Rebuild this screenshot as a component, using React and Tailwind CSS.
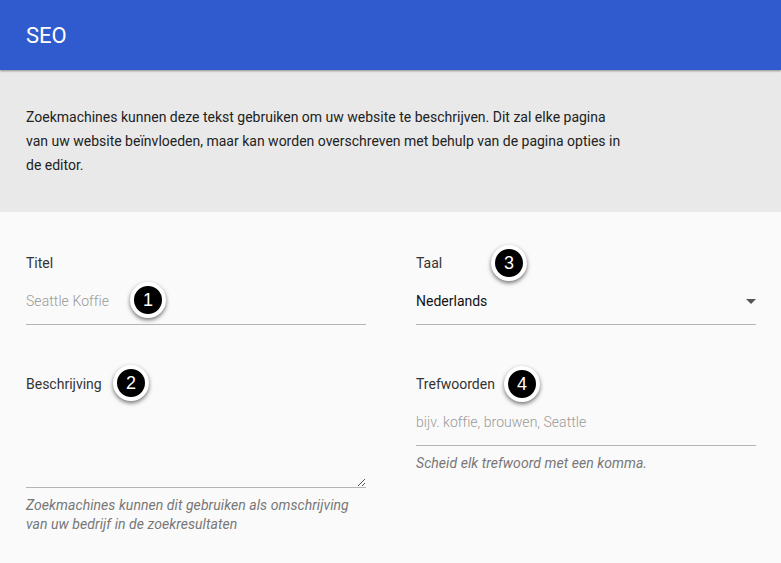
function Badge({ n, className }) {
  return (
    <span className={`absolute flex h-[36px] w-[36px] items-center justify-center rounded-full border-[4px] border-white bg-black font-['Liberation_Sans',sans-serif] text-[18px] text-white shadow-[0_2px_4px_rgba(0,0,0,0.55)] ${className}`}>
      {n}
    </span>
  );
}
export default function App() {
  return (
    <div className="h-[563px] w-[781px] overflow-hidden bg-[#fafafa] font-['Roboto',sans-serif]">
      <header className="relative z-10 flex h-[70px] items-center bg-[#2f5bce] px-[26px] text-[22px] text-white shadow-[0_1px_2px_rgba(0,0,0,0.4)]">SEO</header>
      <section className="h-[142px] bg-[#e9e9e9] px-[26px] pt-[35px] text-[14px] leading-[24px] text-[#222]">
        <p className="w-[600px]">Zoekmachines kunnen deze tekst gebruiken om uw website te beschrijven. Dit zal elke pagina van uw website beïnvloeden, maar kan worden overschreven met behulp van de pagina opties in de editor.</p>
      </section>
      <main className="grid grid-cols-[340px_340px] gap-x-[50px] px-[26px] pt-[42px] text-[14px] text-[#333]">
        <div>
          <div className="relative h-[71px] border-b border-[#b5b5b5]">
            <div className="leading-[18px]">Titel</div>
            <div className="mt-[19px] font-light leading-[20px] tracking-[0.07px] text-[#999]">Seattle Koffie</div>
            <Badge n="1" className="left-[104px] top-[28px]" />
          </div>
          <div className="relative mt-[50px] h-[113px] border-b border-[#b5b5b5]">
            <div className="leading-[18px]">Beschrijving</div>
            <Badge n="2" className="left-[87px] top-[-10px]" />
            <svg className="absolute bottom-0 right-0" width="9" height="9" viewBox="0 0 9 9"><path d="M1 8 8 1M5 8 8 5" stroke="#555" fill="none" /></svg>
          </div>
          <p className="mt-[8px] text-[14px] leading-[19px] tracking-[0.06px] italic text-[#777]">Zoekmachines kunnen dit gebruiken als omschrijving<br />van uw bedrijf in de zoekresultaten</p>
        </div>
        <div>
          <div className="relative h-[71px] border-b border-[#b5b5b5]">
            <div className="leading-[18px]">Taal</div>
            <div className="mt-[19px] leading-[20px] text-[#111]">Nederlands</div>
            <span className="absolute right-0 top-[45px] h-0 w-0 border-x-[5px] border-t-[5px] border-x-transparent border-t-[#555]" />
            <Badge n="3" className="left-[75px] top-[-9px]" />
          </div>
          <div className="relative mt-[50px] h-[71px] border-b border-[#b5b5b5]">
            <div className="leading-[18px]">Trefwoorden</div>
            <div className="mt-[19px] font-light leading-[20px] tracking-[0.03px] text-[#999]">bijv. koffie, brouwen, Seattle</div>
            <Badge n="4" className="left-[88px] top-[-9px]" />
          </div>
          <p className="mt-[8px] leading-[19px] tracking-[0.06px] italic text-[#777]">Scheid elk trefwoord met een komma.</p>
        </div>
      </main>
    </div>
  );
}
